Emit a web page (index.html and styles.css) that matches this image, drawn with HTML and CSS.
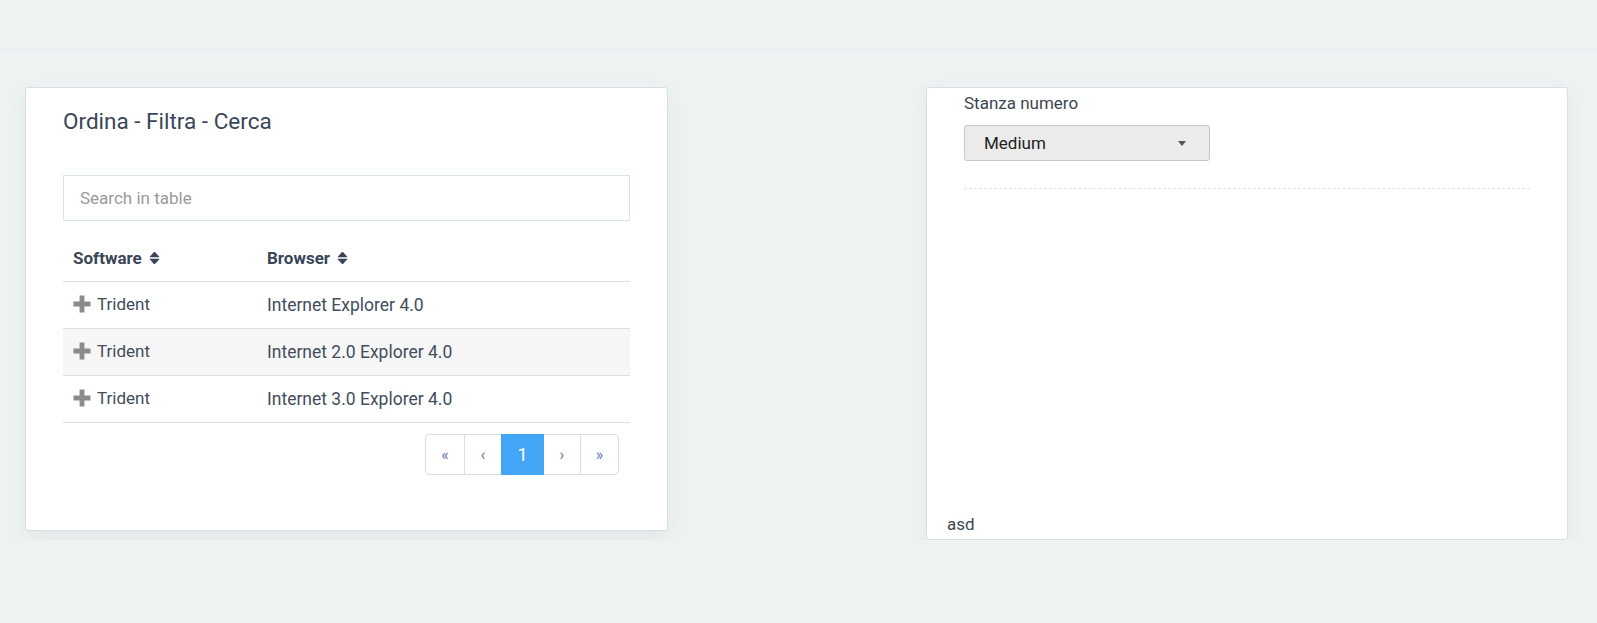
FILE: index.html
```html
<!DOCTYPE html>
<html lang="it">
<head>
<meta charset="utf-8">
<title>Ordina - Filtra - Cerca</title>
<link rel="stylesheet" href="styles.css">
</head>
<body>
<header class="topbar"></header>
<main class="main">
  <section class="card card-table">
    <h4 class="card-title">Ordina - Filtra - Cerca</h4>
    <input class="search" type="text" placeholder="Search in table">
    <table class="table">
      <thead>
        <tr>
          <th class="col-software">Software <svg class="sort" viewBox="0 0 10 13" width="11" height="14"><path d="M0.6 5.3 L4.3 1.2 Q5 0.5 5.7 1.2 L9.4 5.3 Q9.8 5.9 9 5.9 L1 5.9 Q0.2 5.9 0.6 5.3Z"/><path d="M0.6 7.7 L4.3 11.8 Q5 12.5 5.7 11.8 L9.4 7.7 Q9.8 7.1 9 7.1 L1 7.1 Q0.2 7.1 0.6 7.7Z"/></svg></th>
          <th>Browser <svg class="sort" viewBox="0 0 10 13" width="11" height="14"><path d="M0.6 5.3 L4.3 1.2 Q5 0.5 5.7 1.2 L9.4 5.3 Q9.8 5.9 9 5.9 L1 5.9 Q0.2 5.9 0.6 5.3Z"/><path d="M0.6 7.7 L4.3 11.8 Q5 12.5 5.7 11.8 L9.4 7.7 Q9.8 7.1 9 7.1 L1 7.1 Q0.2 7.1 0.6 7.7Z"/></svg></th>
        </tr>
      </thead>
      <tbody>
        <tr>
          <td><span class="cell-soft"><svg class="plus" viewBox="0 0 18 18" width="18" height="18"><path d="M6.6 0.5h4.8v6.1h6.1v4.8h-6.1v6.1H6.6v-6.1H0.5V6.6h6.1z"/></svg>Trident</span></td>
          <td>Internet Explorer 4.0</td>
        </tr>
        <tr class="striped">
          <td><span class="cell-soft"><svg class="plus" viewBox="0 0 18 18" width="18" height="18"><path d="M6.6 0.5h4.8v6.1h6.1v4.8h-6.1v6.1H6.6v-6.1H0.5V6.6h6.1z"/></svg>Trident</span></td>
          <td>Internet 2.0 Explorer 4.0</td>
        </tr>
        <tr>
          <td><span class="cell-soft"><svg class="plus" viewBox="0 0 18 18" width="18" height="18"><path d="M6.6 0.5h4.8v6.1h6.1v4.8h-6.1v6.1H6.6v-6.1H0.5V6.6h6.1z"/></svg>Trident</span></td>
          <td>Internet 3.0 Explorer 4.0</td>
        </tr>
      </tbody>
    </table>
    <nav class="pager-wrap">
      <ul class="pager">
        <li><a class="pg pg-first" href="#">«</a></li>
        <li><a class="pg pg-prev" href="#">‹</a></li>
        <li><a class="pg pg-num active" href="#">1</a></li>
        <li><a class="pg pg-next" href="#">›</a></li>
        <li><a class="pg pg-last" href="#">»</a></li>
      </ul>
    </nav>
  </section>

  <section class="card card-form">
    <div class="form-body">
      <label class="form-label">Stanza numero</label>
      <div class="select">
        <span class="select-value">Medium</span>
        <span class="caret"></span>
      </div>
      <hr class="dashed">
    </div>
    <footer class="form-footer">asd</footer>
  </section>
</main>
</body>
</html>
```

FILE: styles.css
```css
html, body {
  margin: 0;
  padding: 0;
}

body {
  background: #eef2f3;
  font-family: Roboto, "Liberation Sans", sans-serif;
  color: #414b59;
  font-size: 17px;
}

.topbar {
  height: 49px;
  border-bottom: 1px solid #e4e9eb;
  background: #eef2f3;
}

.main {
  display: flex;
  justify-content: space-between;
  align-items: flex-start;
  padding: 37px 29px 0 25px;
}

.card {
  background: #fff;
  border: 1px solid #d9dfe1;
  border-radius: 3px;
  box-shadow: 0 6px 18px rgba(60, 80, 90, 0.07);
  box-sizing: border-box;
}

/* ---------- left card ---------- */
.card-table {
  width: 643px;
  padding: 21px 37px 55px 37px;
}

.card-title {
  margin: 0 0 42px 0;
  font-size: 22.5px;
  font-weight: 400;
  line-height: 24px;
  color: #3a4657;
}

.search {
  display: block;
  width: 100%;
  height: 46px;
  box-sizing: border-box;
  border: 1px solid #dbe4e6;
  border-radius: 0;
  padding: 0 16px;
  margin: 0 0 14px 0;
  font-family: Roboto, "Liberation Sans", sans-serif;
  font-size: 17px;
  color: #444;
  outline: none;
}

.search::placeholder {
  color: #9a9a9a;
}

.table {
  width: 100%;
  border-collapse: collapse;
  border-spacing: 0;
}

.table th {
  text-align: left;
  font-size: 17px;
  font-weight: 700;
  color: #3a4657;
  height: 46px;
  padding: 0 10px;
  border-bottom: 1px solid #dedede;
  box-sizing: content-box;
  line-height: 22px;
  vertical-align: middle;
}

.col-software {
  width: 174px;
}

.sort {
  fill: #3a4657;
  vertical-align: -1px;
  margin-left: 3px;
}

.table td {
  height: 46px;
  padding: 0 10px;
  border-bottom: 1px solid #dedede;
  font-size: 17.5px;
  line-height: 22px;
  color: #444d5c;
  vertical-align: middle;
}

.table td:first-child {
  font-size: 17px;
}

.table tr.striped td {
  background: #f6f6f6;
}

.cell-soft {
  display: inline-flex;
  align-items: center;
  gap: 6px;
}

.plus {
  fill: #8d8a89;
  flex: none;
}

.pager-wrap {
  display: flex;
  justify-content: flex-end;
  margin: 11px 11px 0 0;
}

.pager {
  display: flex;
  list-style: none;
  margin: 0;
  padding: 0;
}

.pg {
  display: flex;
  align-items: center;
  justify-content: center;
  height: 41px;
  box-sizing: border-box;
  border: 1px solid #dddddd;
  margin-left: -1px;
  text-decoration: none;
  color: #5f7aa3;
  font-size: 16px;
  background: #fff;
  position: relative;
}

.pg-first {
  width: 40px;
  margin-left: 0;
  border-radius: 4px 0 0 4px;
}

.pg-prev {
  width: 38px;
}

.pg-num {
  width: 43px;
  font-size: 18px;
}

.pg-next {
  width: 38px;
}

.pg-last {
  width: 39px;
  border-radius: 0 4px 4px 0;
}

.pg.active {
  background: #42a5f5;
  border-color: #42a5f5;
  color: #fff;
  z-index: 2;
}

/* ---------- right card ---------- */
.card-form {
  width: 642px;
  display: flex;
  flex-direction: column;
}

.form-body {
  height: 421px;
  box-sizing: border-box;
  padding: 4px 37px 0 37px;
}

.form-label {
  display: block;
  font-size: 17px;
  line-height: 22px;
  color: #3d4552;
  margin: 0 0 11px 0;
}

.select {
  width: 246px;
  height: 36px;
  box-sizing: border-box;
  background: #ebebeb;
  border: 1px solid #c6c6c6;
  border-radius: 3px;
  display: flex;
  align-items: center;
  justify-content: space-between;
  padding: 0 23px 0 19px;
}

.select-value {
  font-size: 17px;
  color: #222;
}

.caret {
  width: 0;
  height: 0;
  border-left: 4.5px solid transparent;
  border-right: 4.5px solid transparent;
  border-top: 5px solid #555;
}

.dashed {
  border: 0;
  border-top: 1px dashed #e2e2e2;
  margin: 27px 0 0 0;
  height: 0;
}

.form-footer {
  height: 30px;
  box-sizing: border-box;
  padding: 4px 20px;
  font-size: 17px;
  line-height: 22px;
  color: #3d4552;
}
```
